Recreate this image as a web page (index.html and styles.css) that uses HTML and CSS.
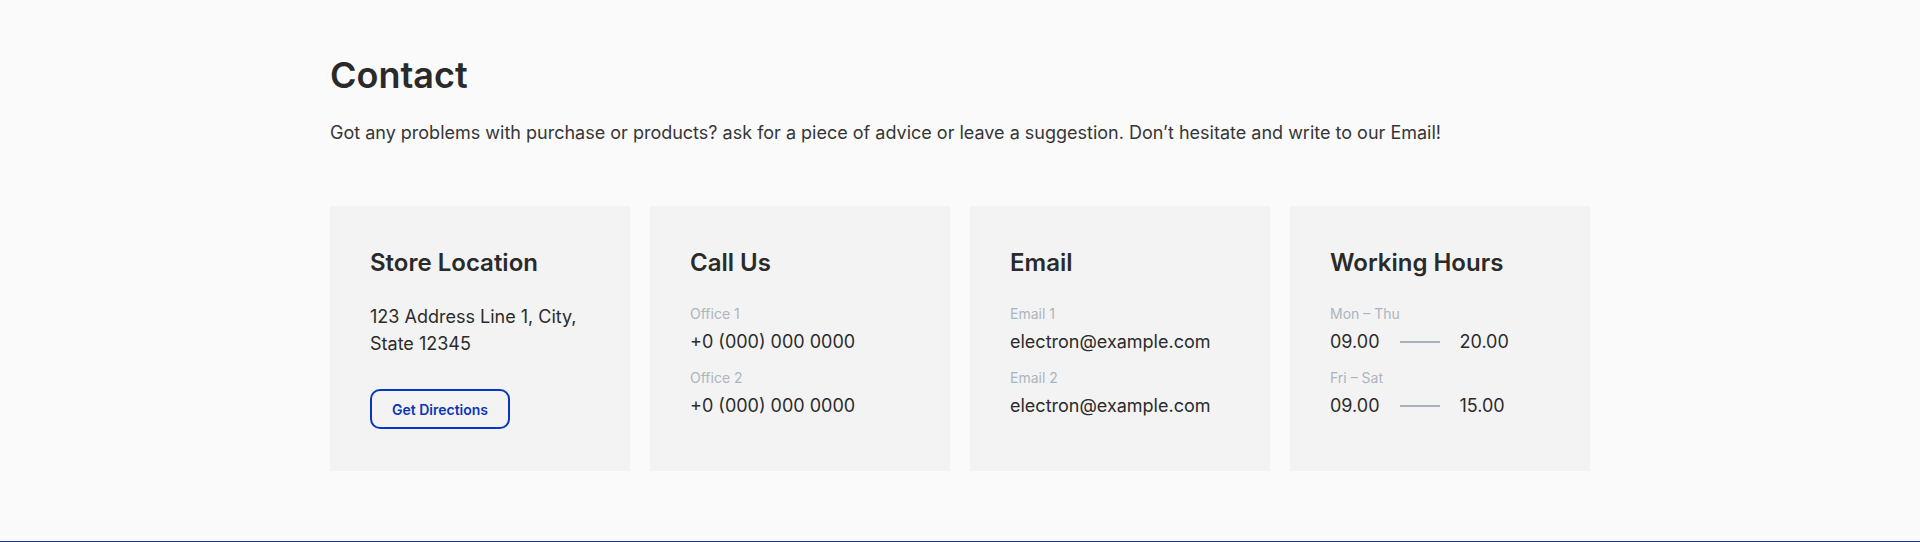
FILE: index.html
```html
<!DOCTYPE html>
<html lang="en">
<head>
    <meta charset="UTF-8">
    <meta name="viewport" content="width=device-width, initial-scale=1.0">
    <title>Contact</title>
    <link rel="stylesheet" href="styles.css">
</head>
<body>

    <section class="contact">
        <h1>Contact</h1>
        <p class="intro">Got any problems with purchase or products? ask for a piece of advice or leave a suggestion. Don’t hesitate and write to our Email!</p>

        <div class="cards">
            <div class="card">
                <h2>Store Location</h2>
                <p class="address">123 Address Line 1, City,<br>State 12345</p>
                <button class="btn-outline">Get Directions</button>
            </div>

            <div class="card">
                <h2>Call Us</h2>
                <div class="item">
                    <span class="label">Office 1</span>
                    <span class="value">+0 (000) 000 0000</span>
                </div>
                <div class="item">
                    <span class="label">Office 2</span>
                    <span class="value">+0 (000) 000 0000</span>
                </div>
            </div>

            <div class="card">
                <h2>Email</h2>
                <div class="item">
                    <span class="label">Email 1</span>
                    <span class="value">electron@example.com</span>
                </div>
                <div class="item">
                    <span class="label">Email 2</span>
                    <span class="value">electron@example.com</span>
                </div>
            </div>

            <div class="card">
                <h2>Working Hours</h2>
                <div class="item">
                    <span class="label">Mon – Thu</span>
                    <span class="value hours">09.00 <i class="dash"></i> 20.00</span>
                </div>
                <div class="item">
                    <span class="label">Fri – Sat</span>
                    <span class="value hours">09.00 <i class="dash"></i> 15.00</span>
                </div>
            </div>
        </div>
    </section>

    <div class="bottom-line"></div>

</body>
</html>
```

FILE: styles.css
```css
body {
    font-family: 'Inter', 'Noto Sans', sans-serif;
    background-color: #fafafa;
    color: #2b2b2b;
    margin: 0;
    height: 542px;
    display: flex;
    flex-direction: column;
}

.contact {
    width: 1260px;
    margin: 0 auto;
    padding-top: 54px;
    flex-grow: 1;
}

h1 {
    font-size: 36px;
    font-weight: 600;
    line-height: 43px;
    margin: 0;
    color: #2a2a2a;
}

.intro {
    font-size: 18px;
    line-height: 27px;
    margin: 22px 0 0;
    color: #363636;
}

.cards {
    display: grid;
    grid-template-columns: repeat(4, 300px);
    gap: 20px;
    margin-top: 60px;
}

.card {
    background: #f3f3f3;
    padding: 42px 40px;
    display: flex;
    flex-direction: column;
    align-items: flex-start;
}

.card h2 {
    font-size: 24px;
    font-weight: 600;
    line-height: 29px;
    margin: 0;
    color: #2a2a2a;
}

.address {
    font-size: 18px;
    line-height: 27px;
    margin: 26px 0 0;
}

.btn-outline {
    margin-top: 32px;
    width: 140px;
    height: 40px;
    border: 2px solid #0a36c4;
    border-radius: 10px;
    background: transparent;
    color: #0a36b8;
    font-family: inherit;
    font-size: 14px;
    font-weight: 600;
    cursor: pointer;
}

.item {
    display: flex;
    flex-direction: column;
    gap: 4px;
    margin-top: 13px;
}

.card h2 + .item {
    margin-top: 27px;
}

.label {
    font-size: 14px;
    line-height: 20px;
    color: #abb5c0;
}

.value {
    font-size: 18px;
    line-height: 27px;
    color: #2b2b2b;
}

.hours {
    display: flex;
    align-items: center;
    gap: 20px;
}

.dash {
    display: block;
    width: 40px;
    height: 2px;
    background: #a7b1bd;
}

.bottom-line {
    height: 1px;
    background: #0a33a8;
}
```
